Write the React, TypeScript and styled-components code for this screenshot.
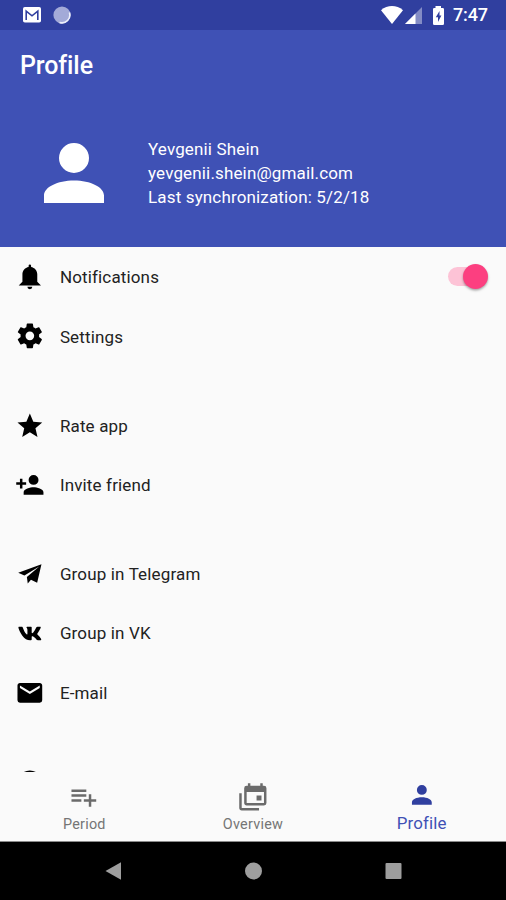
import React from "react";
import styled, { createGlobalStyle } from "styled-components";

const GlobalStyle = createGlobalStyle`
  * { box-sizing: border-box; }
  body { margin: 0; background: #fafafa; }
`;

const Screen = styled.div`
  width: 506px;
  height: 900px;
  display: flex;
  flex-direction: column;
  overflow: hidden;
  background: #fafafa;
  color: #161616;
  font-family: Roboto, "Noto Sans", sans-serif;
`;

const StatusBar = styled.header`
  flex: none;
  height: 29.5px;
  padding: 1px 19px 0 22px;
  display: flex;
  align-items: center;
  justify-content: space-between;
  background: #303f9f;
  color: #fff;
`;

const StatusGroup = styled.div<{ $gap: number }>`
  display: flex;
  align-items: center;
  gap: ${(p) => p.$gap}px;
  svg { display: block; }
`;

const Clock = styled.time`
  width: 34px;
  margin-left: -1px;
  font-size: 18px;
  line-height: 28px;
  font-weight: 500;
  white-space: nowrap;
  letter-spacing: -0.15px;
`;

const Hero = styled.section`
  flex: none;
  height: 217px;
  background: #3f51b5;
  color: #fff;
`;

const Title = styled.h1`
  margin: 0;
  padding: 0 20px;
  font-size: 25px;
  line-height: 72px;
  font-weight: 500;
  letter-spacing: -0.1px;
`;

const Account = styled.div`
  display: flex;
  align-items: center;
  height: 142px;
  padding-left: 29px;
`;

const AccountLines = styled.div`
  margin-left: 29px;
  font-size: 17px;
  line-height: 24px;
  letter-spacing: 0.15px;
`;

const Glyph = styled.svg<{ $size: number }>`
  display: block;
  flex: none;
  width: ${(p) => p.$size}px;
  height: ${(p) => p.$size}px;
  fill: currentColor;
`;

const List = styled.main`
  flex: none;
  height: 525.5px;
  padding-top: 0.7px;
  overflow: hidden;
  display: flex;
  flex-direction: column;
  gap: 29.7px;
`;

const Group = styled.div`
  flex: none;

  &:last-child { padding-top: 1.2px; }
`;

const Row = styled.div`
  height: 59.4px;
  padding: 0 18px 0 15.2px;
  display: flex;
  align-items: center;
  color: #000;
`;

const RowLabel = styled.span`
  flex: 1;
  margin-left: 15px;
  padding-top: 0.5px;
  font-size: 17px;
  line-height: 24px;
  letter-spacing: 0.15px;
  color: #222;
`;

const Track = styled.div`
  width: 36px;
  height: 19px;
  margin-right: 4px;
  border-radius: 10px;
  background: #fdc3d6;
  display: flex;
  align-items: center;
  justify-content: flex-end;
`;

const Thumb = styled.div`
  flex: none;
  width: 25px;
  height: 25px;
  margin-right: -4px;
  border-radius: 50%;
  background: #fc3f80;
  box-shadow: 0 1.5px 2.5px rgba(0, 0, 0, 0.35);
`;

const Tabs = styled.nav`
  flex: none;
  height: 69.5px;
  display: grid;
  grid-template-columns: repeat(3, 1fr);
  background: #fafafa;
  border-bottom: 1px solid #8b8b8b;
`;

const Tab = styled.div<{ $active?: boolean }>`
  display: flex;
  flex-direction: column;
  align-items: center;
  padding-top: ${(p) => (p.$active ? 7.5 : 10)}px;
  color: ${(p) => (p.$active ? "#303f9f" : "#6b6b6b")};
`;

const TabLabel = styled.span<{ $active?: boolean }>`
  margin-top: ${(p) => (p.$active ? 4 : 3)}px;
  font-size: ${(p) => (p.$active ? 16.9 : 14.4)}px;
  line-height: 20px;
  letter-spacing: ${(p) => (p.$active ? 0.1 : 0.25)}px;
  color: ${(p) => (p.$active ? "#3f51b5" : "#757575")};
`;

const SystemBar = styled.footer`
  flex: 1;
  display: flex;
  align-items: center;
  justify-content: center;
  gap: 123px;
  background: #000;
  svg { display: block; fill: #9e9e9e; }
`;

const paths = {
  bell: "M14 20A2 2 0 0 1 12 22A2 2 0 0 1 10 20H14M12 2A1 1 0 0 1 13 3V4.08C15.84 4.56 18 7.03 18 10V16L21 19H3L6 16V10C6 7.03 8.16 4.56 11 4.08V3A1 1 0 0 1 12 2Z",
  gear: "M12 15.5A3.5 3.5 0 0 1 8.5 12A3.5 3.5 0 0 1 12 8.5A3.5 3.5 0 0 1 15.5 12A3.5 3.5 0 0 1 12 15.5M19.43 12.97C19.47 12.65 19.5 12.33 19.5 12S19.47 11.34 19.43 11L21.54 9.37C21.73 9.22 21.78 8.95 21.66 8.73L19.66 5.27C19.54 5.05 19.27 4.96 19.05 5.05L16.56 6.05C16.04 5.66 15.5 5.32 14.87 5.07L14.5 2.42C14.46 2.18 14.25 2 14 2H10C9.75 2 9.54 2.18 9.5 2.42L9.13 5.07C8.5 5.32 7.96 5.66 7.44 6.05L4.95 5.05C4.73 4.96 4.46 5.05 4.34 5.27L2.34 8.73C2.21 8.95 2.27 9.22 2.46 9.37L4.57 11C4.53 11.34 4.5 11.67 4.5 12S4.53 12.65 4.57 12.97L2.46 14.63C2.27 14.78 2.21 15.05 2.34 15.27L4.34 18.73C4.46 18.95 4.73 19.03 4.95 18.95L7.44 17.94C7.96 18.34 8.5 18.68 9.13 18.93L9.5 21.58C9.54 21.82 9.75 22 10 22H14C14.25 22 14.46 21.82 14.5 21.58L14.87 18.93C15.5 18.67 16.04 18.34 16.56 17.94L19.05 18.95C19.27 19.03 19.54 18.95 19.66 18.73L21.66 15.27C21.78 15.05 21.73 14.78 21.54 14.63L19.43 12.97Z",
  star: "M12 17.27L18.18 21L16.54 13.97L22 9.24L14.81 8.62L12 2L9.19 8.62L2 9.24L7.45 13.97L5.82 21Z",
  invite: "M15 14C12.33 14 7 15.33 7 18V20H23V18C23 15.33 17.67 14 15 14M6 10V7H4V10H1V12H4V15H6V12H9V10M15 12A4 4 0 0 0 19 8A4 4 0 0 0 15 4A4 4 0 0 0 11 8A4 4 0 0 0 15 12Z",
  plane: "M21.4 4.2L17.9 19.2L12.9 16.7L10.3 19.9L9.6 14.6L19.6 6.1L7.6 13.3L2.6 11.2Z",
  vk: "M20.8 7.74C20.93 7.32 20.8 7 20.18 7H18.16C17.64 7 17.41 7.27 17.28 7.57C17.28 7.57 16.25 10.08 14.79 11.72C14.31 12.19 14.1 12.34 13.84 12.34C13.71 12.34 13.5 12.19 13.5 11.77V7.74C13.5 7.23 13.38 7 12.95 7H9.76C9.44 7 9.25 7.24 9.25 7.47C9.25 7.95 9.97 8.07 10.04 9.47V12.5C10.04 13.16 9.93 13.28 9.68 13.28C9 13.28 7.34 10.77 6.36 7.9C6.16 7.24 5.97 7 5.45 7H3.43C2.85 7 2.74 7.27 2.74 7.57C2.74 8.11 3.43 10.77 5.95 14.26C7.63 16.67 10 18 12.13 18C13.42 18 13.5 17.71 13.5 17.21V15.38C13.5 14.8 13.62 14.68 14.03 14.68C14.33 14.68 14.85 14.83 16.06 16C17.44 17.38 17.67 18 18.45 18H20.47C21.05 18 21.34 17.71 21.17 17.14C21 16.57 20.34 15.74 19.5 14.78C19.04 14.24 18.35 13.65 18.14 13.36C17.85 12.97 17.93 12.81 18.14 12.46C18.14 12.46 20.6 9 20.8 7.74Z",
  mail: "M20 8L12 13L4 8V6L12 11L20 6M20 4H4C2.89 4 2 4.89 2 6V18A2 2 0 0 0 4 20H20A2 2 0 0 0 22 18V6C22 4.89 21.1 4 20 4Z",
  info: "M13 9H11V7H13M13 17H11V11H13M12 2A10 10 0 1 0 12 22A10 10 0 1 0 12 2Z",
  person: "M12 4A4 4 0 0 1 16 8A4 4 0 0 1 12 12A4 4 0 0 1 8 8A4 4 0 0 1 12 4M12 14C16.42 14 20 15.79 20 18V20H4V18C4 15.79 7.58 14 12 14Z",
  playlist: "M2 16H10V14H2M18 14V10H16V14H12V16H16V20H18V16H22V14M14 6H2V8H14M14 10H2V12H14V10Z",
  calendars: "M21 17V8H7V17H21M21 3A2 2 0 0 1 23 5V17A2 2 0 0 1 21 19H7C5.89 19 5 18.1 5 17V5A2 2 0 0 1 7 3H8V1H10V3H18V1H20V3H21M3 21H17V23H3C1.89 23 1 22.1 1 21V9H3V21M19 15H15V11H19V15Z",
};

type IconName = keyof typeof paths;

function Icon({ name, size = 29.7 }: { name: IconName; size?: number }) {
  return (
    <Glyph viewBox="0 0 24 24" $size={size} aria-hidden>
      <path d={paths[name]} fillRule={name === "info" ? "evenodd" : undefined} />
    </Glyph>
  );
}

const groups: { icon: IconName; label: string; toggle?: boolean }[][] = [
  [
    { icon: "bell", label: "Notifications", toggle: true },
    { icon: "gear", label: "Settings" },
  ],
  [
    { icon: "star", label: "Rate app" },
    { icon: "invite", label: "Invite friend" },
  ],
  [
    { icon: "plane", label: "Group in Telegram" },
    { icon: "vk", label: "Group in VK" },
    { icon: "mail", label: "E-mail" },
  ],
  [{ icon: "info", label: "" }],
];

const tabs: { icon: IconName; label: string; active?: boolean }[] = [
  { icon: "playlist", label: "Period" },
  { icon: "calendars", label: "Overview" },
  { icon: "person", label: "Profile", active: true },
];

export default function App() {
  return (
    <Screen>
      <GlobalStyle />
      <StatusBar>
        <StatusGroup $gap={11}>
          <svg width="20" height="16" viewBox="0 0 20 16">
            <rect x="1" y="0" width="18" height="15.5" rx="1.8" fill="#fff" />
            <path d="M4.2 13V4.2L10 8.8L15.8 4.2V13" fill="none" stroke="#303f9f" strokeWidth="1.6" />
          </svg>
          <svg width="18" height="18" viewBox="0 0 18 18">
            <circle cx="9" cy="9" r="8.6" fill="#a3aad8" />
            <path d="M16.4 6.5A7.8 7.8 0 0 1 6.5 16.4" fill="none" stroke="#eef0fb" strokeWidth="1.6" />
          </svg>
        </StatusGroup>
        <StatusGroup $gap={2}>
          <svg width="22" height="18" viewBox="0 0 22 18">
            <path d="M0 4.2C6.5 -1.4 15.5 -1.4 22 4.2L11 18Z" fill="#fff" />
          </svg>
          <svg width="17" height="17" viewBox="0 0 17 17">
            <path d="M17 0V17H0Z" fill="#838cc5" />
            <path d="M10.5 6.5V17H0Z" fill="#fff" />
          </svg>
          <svg width="28" height="19" viewBox="1 0 28 19">
            <path d="M12.5 0H18V2H19.7Q21 2 21 3.3V17.7Q21 19 19.7 19H11.3Q10 19 10 17.7V3.3Q10 2 11.3 2H12.5Z" fill="#fff" />
            <path d="M16.5 5L12.8 11.2H15V16L18.4 9.6H16.5Z" fill="#303f9f" />
          </svg>
          <Clock>7:47</Clock>
        </StatusGroup>
      </StatusBar>
      <Hero>
        <Title>Profile</Title>
        <Account>
          <Icon name="person" size={90} />
          <AccountLines>
            <div>Yevgenii Shein</div>
            <div>yevgenii.shein@gmail.com</div>
            <div>Last synchronization: 5/2/18</div>
          </AccountLines>
        </Account>
      </Hero>
      <List>
        {groups.map((rows, i) => (
          <Group key={i}>
            {rows.map((row) => (
              <Row key={row.icon}>
                <Icon name={row.icon} />
                <RowLabel>{row.label}</RowLabel>
                {row.toggle && (
                  <Track role="switch" aria-checked="true">
                    <Thumb />
                  </Track>
                )}
              </Row>
            ))}
          </Group>
        ))}
      </List>
      <Tabs>
        {tabs.map((tab) => (
          <Tab key={tab.label} $active={tab.active}>
            <Icon name={tab.icon} />
            <TabLabel $active={tab.active}>{tab.label}</TabLabel>
          </Tab>
        ))}
      </Tabs>
      <SystemBar>
        <svg width="17" height="18" viewBox="0 0 17 18">
          <path d="M0.5 9L16 0.3V17.7Z" />
        </svg>
        <svg width="17" height="18" viewBox="0 0 17 18">
          <circle cx="8.5" cy="9" r="8.5" />
        </svg>
        <svg width="17" height="18" viewBox="0 0 17 18">
          <rect x="0.5" y="1" width="16" height="16" rx="1" />
        </svg>
      </SystemBar>
    </Screen>
  );
}
